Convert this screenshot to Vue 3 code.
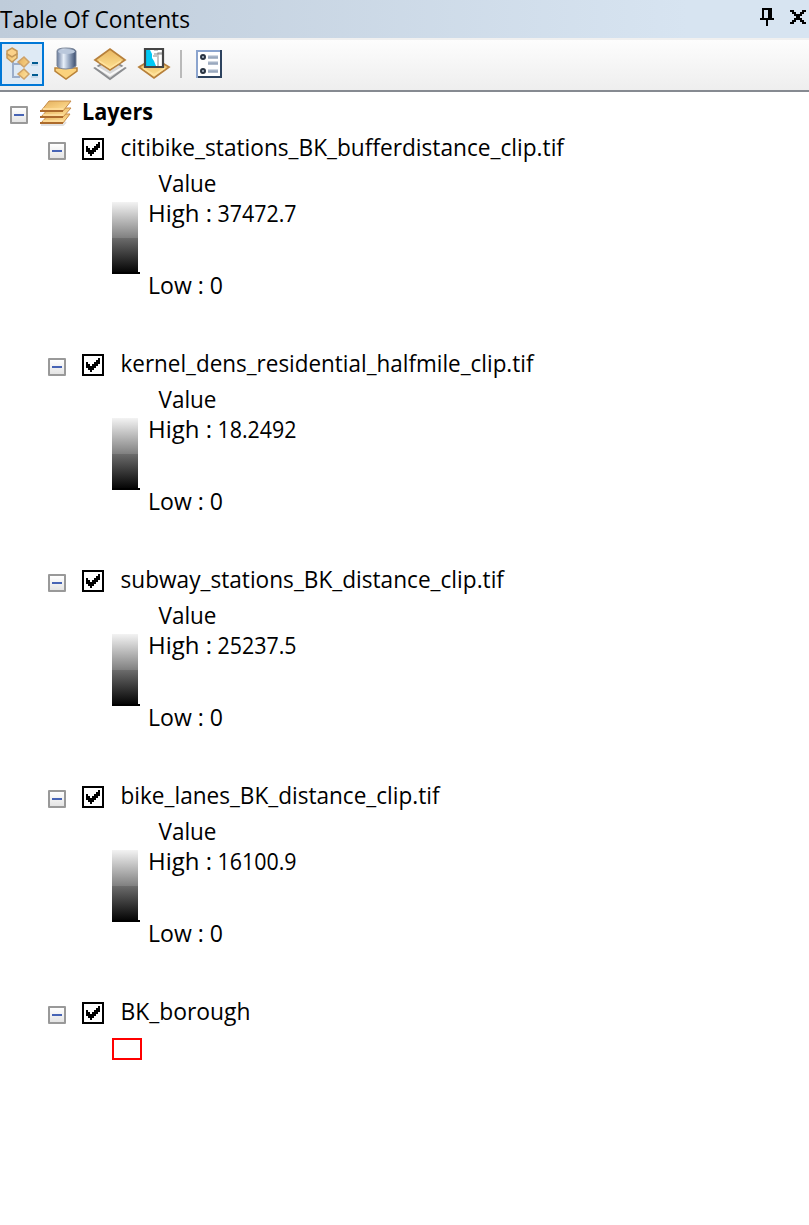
<script setup>
const rasters = [
  { name: 'citibike_stations_BK_bufferdistance_clip.tif', width: 443.5, high: '37472.7' },
  { name: 'kernel_dens_residential_halfmile_clip.tif', width: 413, high: '18.2492' },
  { name: 'subway_stations_BK_distance_clip.tif', width: 383.5, high: '25237.5' },
  { name: 'bike_lanes_BK_distance_clip.tif', width: 319, high: '16100.9' },
]
const layers = [...rasters, { name: 'BK_borough', width: 130 }]
</script>

<template>
  <main class="panel">
    <header class="title">
      <svg class="label" width="200" height="38"><text x="0" y="28" textLength="190" lengthAdjust="spacingAndGlyphs">Table Of Contents</text></svg>
      <svg class="window" width="50" height="38" viewBox="0 0 25 19" shape-rendering="crispEdges">
        <path d="M2 4h5v5h1v1H5v3H4v-3H1V9h1zM3 5v4h2V5z" fill-rule="evenodd" />
        <path d="M16 5h2v1h1v1h2V6h1V5h2v1h-1v1h-1v1h-1v1h1v1h1v1h1v1h-2v-1h-1v-1h-2v1h-1v1h-2v-1h1v-1h1V9h1V8h-1V7h-1V6h-1z" />
      </svg>
    </header>
    <nav class="toolbar">
      <svg width="240" height="50" viewBox="0 40 240 50">
        <defs>
          <linearGradient id="gold" x1="0" y1="0" x2="1" y2="1"><stop stop-color="#e0ad5c" /><stop offset=".5" stop-color="#f4c979" /><stop offset="1" stop-color="#ffe7a5" /></linearGradient>
          <linearGradient id="goldDown" x1="0" y1="0" x2="0" y2="1"><stop stop-color="#e8b661" /><stop offset="1" stop-color="#ffe394" /></linearGradient>
          <linearGradient id="steel"><stop stop-color="#65789a" /><stop offset=".35" stop-color="#e8f0fa" /><stop offset=".6" stop-color="#a1b1c9" /><stop offset="1" stop-color="#394c6d" /></linearGradient>
        </defs>
        <rect x="1" y="43" width="42" height="42" fill="#deeaf5" stroke="#0078d7" stroke-width="2" />
        <path d="M13 61V77H20M13 64H20" fill="none" stroke="#9baeca" stroke-width="2" />
        <path d="M12 51l5 3v4l-5 4-5-4v-4z" fill="url(#gold)" stroke="#c49858" stroke-width="1.5" />
        <path d="M12 48l5 3v3l-5 3-5-3v-3z" fill="#fbd28a" stroke="#c49858" stroke-width="1.5" />
        <path d="M24 57l5 5-5 5-6-5zM24 69l5 5-5 5-6-5z" fill="url(#gold)" stroke="#cda269" stroke-width="1.5" />
        <path d="M32 63h6M32 75h6" stroke="#005b91" stroke-width="2" />
        <path d="M31 65h7M31 77h7" stroke="#abc5dc" stroke-width="1" />

        <path d="M55 68H77V71L66 79 55 71z" fill="#fbd27c" stroke="#b98238" stroke-width="1.5" />
        <path d="M57 51Q57 48 66 48T76 51V66Q73 69 66 69T57 66z" fill="url(#steel)" stroke="#7c879a" />
        <ellipse cx="66.500" cy="51.500" rx="8.500" ry="2.500" fill="#bac8dc" />

        <path d="M95 68l15-9 15 9-15 11z" fill="#d8d8d8" stroke="#8c8e91" stroke-width="2" />
        <path d="M95 66l15 9 15-9" fill="none" stroke="#f8f8f8" stroke-width="2" />
        <path d="M95 60l15-11 15 11-15 10z" fill="url(#goldDown)" stroke="#b7803b" stroke-width="1.800" />
        <path d="M99 61l11 7 11-7" fill="none" stroke="#ffe29c" stroke-width="1.500" />

        <path d="M139 67l15-9 15 9-15 11z" fill="url(#goldDown)" stroke="#b7803b" stroke-width="1.800" />
        <path d="M143 68l11 7 11-7" fill="none" stroke="#ffe29c" stroke-width="1.500" />
        <path d="M145 49h18v18h-18z" fill="#fff" />
        <path d="M146 50h4l2 4v4l2 3 2 5h-10z" fill="#00c8f4" />
        <path d="M154 50h4M153 56h4l2-2h3M158 56v10" fill="none" stroke="#c4c4c4" stroke-width="2" />
        <path d="M154 54h4v-1h4" fill="none" stroke="#888" stroke-width="1.200" />
        <path d="M145 49h18v18h-18z" fill="none" stroke="#444" stroke-width="2.200" />

        <path d="M181 50v28" stroke="#b9b9b9" stroke-width="2" />
        <path d="M196 50h26v28h-26z" fill="#2c425e" />
        <path d="M196 50h24v26h-22v2h-2z" fill="#8ba4ce" />
        <path d="M198 52h22v24h-22z" fill="#fff" />
        <g fill="#b4c0ce" stroke="#293442" stroke-width="2"><circle cx="203" cy="57" r="2" /><circle cx="203" cy="71" r="2" /></g>
        <path d="M208 57h10M208 63h10M208 71h10" stroke="#a8b5c8" stroke-width="3" />
        <path d="M208 58h10M208 64h10M208 72h10" stroke="#8d9cb4" />
      </svg>
    </nav>
    <section class="tree">
      <div class="row root">
        <i class="toggle" />
        <svg class="stack" width="34" height="28" viewBox="40 100 34 28">
          <path d="M41 125h22l3-3" fill="none" stroke="#e2e2e2" stroke-width="2" />
          <g fill="url(#gold)" stroke="#c68b48" stroke-width="1">
            <path d="M41 123l8-9h21l-7 9z" />
            <path d="M41 117l8-9h22l-8 9z" />
            <path d="M41 111l8-10h22l-8 10z" />
          </g>
          <path d="M40 123h23M40 117h23M40 111h23" stroke="#ad6b2c" stroke-width="1.800" />
          <path d="M43 121h20M43 115h20M43 109h20" stroke="#ffe0a0" stroke-width="1.600" />
        </svg>
        <svg class="label bold" width="120" height="36"><text x="0" y="24" textLength="71" lengthAdjust="spacingAndGlyphs">Layers</text></svg>
      </div>
      <article v-for="layer in layers" :key="layer.name" class="layer">
        <div class="row">
          <i class="toggle" />
          <svg class="check" width="22" height="22" viewBox="0 0 11 11" shape-rendering="crispEdges">
            <path d="M.5.5h10v10H.5z" fill="#fff" stroke="#000" />
            <path d="M2 4h1v1h1v1h1V5h1V4h1V3h1V2h1v3H8v1H7v1H6v1H5v1H4V8H3V7H2z" />
          </svg>
          <svg class="label" width="480" height="36"><text x="0.5" y="24" :textLength="layer.width" lengthAdjust="spacingAndGlyphs">{{ layer.name }}</text></svg>
        </div>
        <template v-if="layer.high">
          <svg class="label value" width="80" height="34"><text x="0.5" y="24" textLength="58" lengthAdjust="spacingAndGlyphs">Value</text></svg>
          <div class="legend">
            <div class="ramp" />
            <div class="range">
              <svg class="label" width="180" height="36">
                <text x="0" y="20" textLength="64" lengthAdjust="spacingAndGlyphs">High :</text>
                <text x="69.500" y="20" textLength="79" lengthAdjust="spacingAndGlyphs">{{ layer.high }}</text>
              </svg>
              <svg class="label" width="100" height="36"><text x="0" y="20" textLength="75" lengthAdjust="spacingAndGlyphs">Low : 0</text></svg>
            </div>
          </div>
        </template>
        <div v-else class="swatch" />
      </article>
    </section>
  </main>
</template>

<style scoped>
.panel { height: 1225px; background: #fff; overflow: hidden; font-family: "Open Sans", "Noto Sans", sans-serif; }
svg { display: block; flex: none; }
.label { overflow: visible; font-size: 23.5px; fill: #000; }
.bold { font-weight: 700; }
.title { height: 38px; display: flex; justify-content: space-between; background: linear-gradient(90deg, #bfccda, #d7e4f1 85%); }
.window { margin-right: 1px; }
.toolbar { box-sizing: border-box; height: 54px; border-top: 2px solid #f0f0f0; border-bottom: 2px solid #868a91; background: linear-gradient(#fdfdfd, #eee); }
.tree { padding-top: 4px; }
.row { display: flex; height: 36px; padding-left: 48px; }
.root { padding-left: 10px; }
.toggle { box-sizing: border-box; flex: none; width: 18px; height: 18px; margin-top: 10px; border: 2px solid #999; border-radius: 1px; background: linear-gradient(#4764b5, #4764b5) center / 10px 2px no-repeat, linear-gradient(#fff, #e4e4e4); }
.stack { margin: 4px 8px 0 12px; }
.check { margin: 6px 16px 0; }
.layer { height: 216px; }
.value { margin-left: 158px; }
.legend { display: flex; padding-left: 112px; }
.ramp { box-sizing: border-box; width: 28px; height: 72px; background: linear-gradient(#000, #000) 0 70px / 28px 2px no-repeat, linear-gradient(#f3f3f3, #808080 50%, #6c6c6c 50%, #000) 0 0 / 26px 72px no-repeat; }
.range { display: flex; flex-direction: column; padding-left: 8px; gap: 36px; }
.swatch { box-sizing: border-box; width: 30px; height: 22px; margin: 6px 0 0 112px; border: 2px solid #f00; }
</style>
